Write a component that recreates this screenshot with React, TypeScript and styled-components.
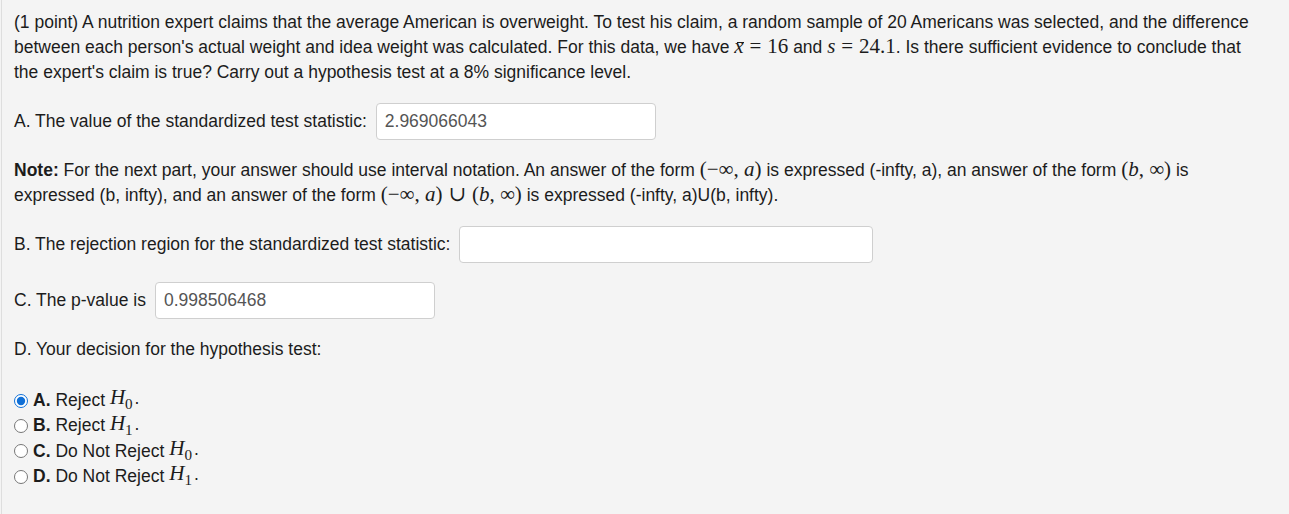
import React from "react"
import styled, { createGlobalStyle } from "styled-components"

const GlobalStyle = createGlobalStyle`
  html, body {
    margin: 0;
    padding: 0;
    background: #f4f4f4;
  }
  body {
    font-family: "Liberation Sans", Arial, sans-serif;
    font-size: 17.5px;
    color: #1c1c1c;
  }
`

const App: React.FC = () => {
  return (
    <>
      <GlobalStyle />
      <Panel>
        <Para>
          (1 point) A nutrition expert claims that the average American is overweight. To test his claim, a random
          sample of 20 Americans was selected, and the difference between each person's actual weight and idea weight
          was calculated. For this data, we have{" "}
          <Math>
            <Bar>x</Bar>
            <Op>=</Op>16
          </Math>{" "}
          and{" "}
          <Math>
            <i>s</i>
            <Op>=</Op>24.1
          </Math>
          . Is there sufficient evidence to conclude that the expert's claim is true? Carry out a hypothesis test at a
          8% significance level.
        </Para>

        <Row>
          <span>A. The value of the standardized test statistic:</span>
          <AnswerInput $width={280} readOnly value="2.969066043" />
        </Row>

        <Para>
          <b>Note:</b> For the next part, your answer should use interval notation. An answer of the form{" "}
          <Math>
            (−∞, <i>a</i>)
          </Math>{" "}
          is expressed (-infty, a), an answer of the form{" "}
          <Math>
            (<i>b</i>, ∞)
          </Math>{" "}
          is expressed (b, infty), and an answer of the form{" "}
          <Math>
            (−∞, <i>a</i>)<Op>∪</Op>(<i>b</i>, ∞)
          </Math>{" "}
          is expressed (-infty, a)U(b, infty).
        </Para>

        <Row>
          <span>B. The rejection region for the standardized test statistic:</span>
          <AnswerInput $width={414} readOnly value="" />
        </Row>

        <Row>
          <span>C. The p-value is</span>
          <AnswerInput $width={280} readOnly value="0.998506468" />
        </Row>

        <Para>D. Your decision for the hypothesis test:</Para>

        <Choices>
          <Choice letter="A" text="Reject" sub="0" checked />
          <Choice letter="B" text="Reject" sub="1" />
          <Choice letter="C" text="Do Not Reject" sub="0" />
          <Choice letter="D" text="Do Not Reject" sub="1" />
        </Choices>
      </Panel>
    </>
  )
}

interface ChoiceProps {
  letter: string
  text: string
  sub: string
  checked?: boolean
}

const Choice: React.FC<ChoiceProps> = props => {
  const { letter, text, sub, checked } = props
  return (
    <ChoiceLabel>
      <Radio type="radio" name="decision" defaultChecked={checked} />
      <b>{letter}.</b>&nbsp;{text}{" "}
      <Math>
        <i>H</i>
        <Sub>{sub}</Sub>
        <Dot>.</Dot>
      </Math>
    </ChoiceLabel>
  )
}

const Panel = styled.div`
  min-height: 514px;
  box-sizing: border-box;
  margin-left: 1px;
  border-left: 1px solid #dedede;
  padding: 10px 27px 0 12px;
`

const Para = styled.p`
  margin: 0;
  line-height: 25px;
`

const Row = styled.div`
  display: flex;
  align-items: center;
  gap: 9px;
  height: 38px;
  margin: 17px 0 18px;
`

const AnswerInput = styled.input<{ $width: number }>`
  width: ${p => p.$width}px;
  height: 37px;
  box-sizing: border-box;
  border: 1px solid #cfcfcf;
  border-radius: 4px;
  background: #fff;
  padding: 0 8px;
  font-family: "Liberation Sans", Arial, sans-serif;
  font-size: 17.5px;
  color: #555;
  outline: none;
`

const Math = styled.span`
  font-family: "Liberation Serif", "DejaVu Serif", serif;
  font-size: 21px;
  line-height: 0;
  white-space: nowrap;
  & i {
    font-style: italic;
  }
`

const Op = styled.span`
  padding: 0 0.28em;
`

const Bar = styled.i`
  display: inline-block;
  position: relative;
  line-height: 1;
  &::before {
    content: "";
    position: absolute;
    left: 0.14em;
    right: 0;
    top: 0.3em;
    border-top: 1px solid currentColor;
  }
`

const Sub = styled.sub`
  font-size: 0.72em;
  vertical-align: -0.32em;
  line-height: 0;
`

const Dot = styled.span`
  font-family: "Liberation Sans", Arial, sans-serif;
  font-size: 17.5px;
  margin-left: 2px;
`

const Choices = styled.div`
  margin-top: 26px;
  display: flex;
  flex-direction: column;
`

const ChoiceLabel = styled.label`
  display: flex;
  align-items: center;
  height: 25.3px;
  white-space: pre;
  & b {
    font-weight: bold;
  }
`

const Radio = styled.input`
  width: 14px;
  height: 14px;
  margin: 0 5px 0 0;
  accent-color: #0f6fd6;
`

export default App
